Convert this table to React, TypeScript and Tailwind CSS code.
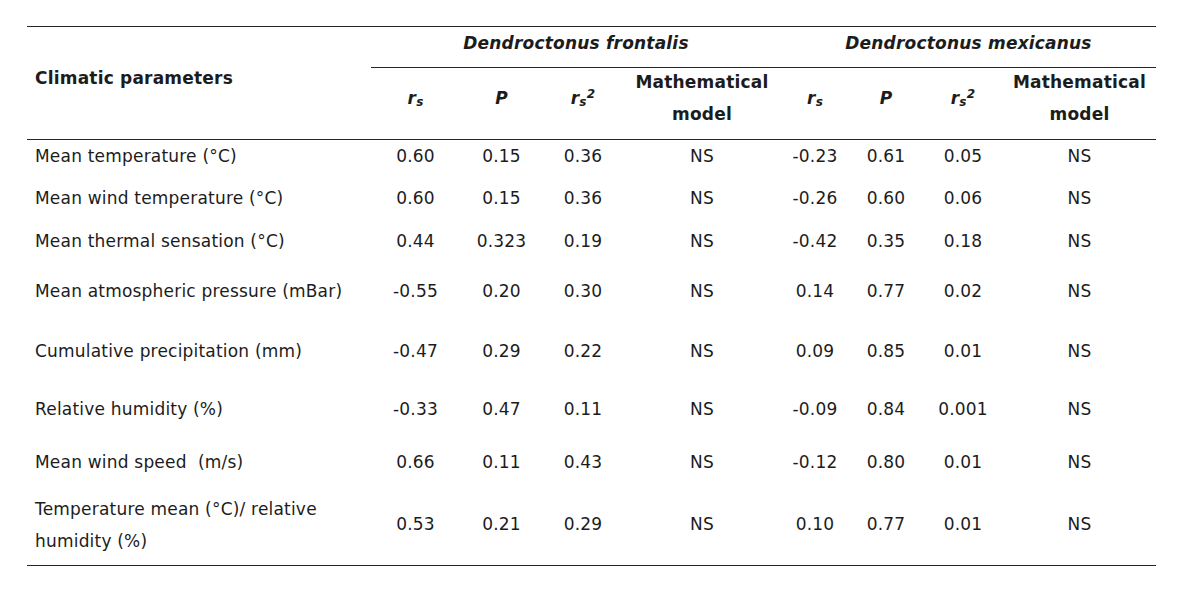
const cols = "grid grid-cols-[344px_89px_83px_80px_158px_68px_74px_80px_153px]";

type Row = {
  label: React.ReactNode;
  vals: string[];
  h: string;
  pt: string;
  labelPt?: string;
};

const rows: Row[] = [
  { label: "Mean temperature (°C)", vals: ["0.60", "0.15", "0.36", "NS", "-0.23", "0.61", "0.05", "NS"], h: "h-[37px]", pt: "pt-0" },
  { label: "Mean wind temperature (°C)", vals: ["0.60", "0.15", "0.36", "NS", "-0.26", "0.60", "0.06", "NS"], h: "h-[42px]", pt: "pt-[5px]" },
  { label: "Mean thermal sensation (°C)", vals: ["0.44", "0.323", "0.19", "NS", "-0.42", "0.35", "0.18", "NS"], h: "h-[47px]", pt: "pt-[6px]" },
  { label: "Mean atmospheric pressure (mBar)", vals: ["-0.55", "0.20", "0.30", "NS", "0.14", "0.77", "0.02", "NS"], h: "h-[55px]", pt: "pt-[9px]" },
  { label: "Cumulative precipitation (mm)", vals: ["-0.47", "0.29", "0.22", "NS", "0.09", "0.85", "0.01", "NS"], h: "h-[59px]", pt: "pt-[14px]" },
  { label: "Relative humidity (%)", vals: ["-0.33", "0.47", "0.11", "NS", "-0.09", "0.84", "0.001", "NS"], h: "h-[56px]", pt: "pt-[13px]" },
  { label: "Mean wind speed\u00a0 (m/s)", vals: ["0.66", "0.11", "0.43", "NS", "-0.12", "0.80", "0.01", "NS"], h: "h-[57px]", pt: "pt-[10px]" },
  {
    label: (
      <>
        Temperature mean (°C)/ relative
        <br />
        humidity (%)
      </>
    ),
    vals: ["0.53", "0.21", "0.29", "NS", "0.10", "0.77", "0.01", "NS"],
    h: "h-[72px]",
    pt: "pt-[15px]",
    labelPt: "pt-0",
  },
];

function Rs({ sq }: { sq?: boolean }) {
  return (
    <span className="italic font-bold">
      r<span className="text-[12px] relative top-[2px]">s</span>
      {sq && <span className="text-[12px] relative -top-[6px]">2</span>}
    </span>
  );
}

function SubHead() {
  return (
    <>
      <div className="h-[71px] pt-[14px] text-center"><Rs /></div>
      <div className="h-[71px] pt-[14px] text-center italic font-bold">P</div>
      <div className="h-[71px] pt-[14px] text-center"><Rs sq /></div>
      <div className="h-[71px] -mt-[2px] text-center font-bold">
        Mathematical
        <br />
        model
      </div>
    </>
  );
}

export default function App() {
  return (
    <div className="w-[1181px] h-[593px] bg-white text-[#1c1c1c] text-[17px] tracking-[0.2px] leading-8 font-['DejaVu_Sans',Verdana,sans-serif]">
      <div className="ml-[27px] pt-[26px] w-[1129px]">
        {/* header */}
        <div className={`${cols} border-t border-b border-[#262626]`}>
          <div className="row-span-2 pl-2 pt-[35px] font-bold">Climatic parameters</div>
          <div className="col-span-4 h-[41px] border-b border-[#262626] text-center italic font-bold">
            Dendroctonus frontalis
          </div>
          <div className="col-span-4 h-[41px] border-b border-[#262626] text-center italic font-bold">
            Dendroctonus mexicanus
          </div>
          <SubHead />
          <SubHead />
        </div>

        {/* body */}
        <div className="border-b border-[#262626]">
          {rows.map((r, i) => (
            <div key={i} className={`${cols} ${r.h}`}>
              <div className={`pl-2 ${r.labelPt ?? r.pt}`}>{r.label}</div>
              {r.vals.map((v, j) => (
                <div key={j} className={`text-center ${r.pt}`}>
                  {v}
                </div>
              ))}
            </div>
          ))}
        </div>
      </div>
    </div>
  );
}
